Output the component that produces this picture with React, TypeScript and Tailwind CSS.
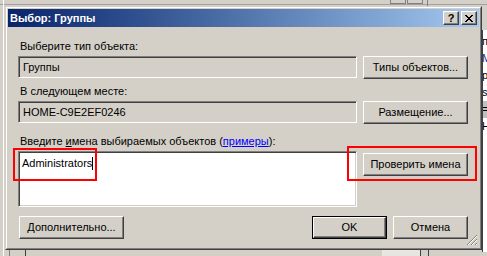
import React from 'react';

const font = "font-['Liberation_Sans',Arial,sans-serif]";

const Button: React.FC<{ label: React.ReactNode; w: string; isDefault?: boolean }> = ({ label, w, isDefault }) => {
  const bevel =
    'h-full w-full flex items-center justify-center border border-t-white border-l-white border-r-[#404040] border-b-[#404040] shadow-[inset_-1px_-1px_0_#808080] text-[11px] text-black';
  if (isDefault) {
    return (
      <div className={`${w} h-[23px] shrink-0 border border-black`}>
        <div className={bevel}>{label}</div>
      </div>
    );
  }
  return (
    <div className={`${w} h-[23px] shrink-0`}>
      <div className={bevel}>{label}</div>
    </div>
  );
};

const Sunken: React.FC<{ className: string; children?: React.ReactNode }> = ({ className, children }) => (
  <div
    className={`${className} shrink-0 border border-t-[#808080] border-l-[#808080] border-r-white border-b-white shadow-[inset_1px_1px_0_#404040,inset_-1px_-1px_0_#d4d0c8]`}
  >
    {children}
  </div>
);

export default function App() {
  return (
    <div className={`relative w-[487px] h-[256px] overflow-hidden bg-[#d4d0c8] ${font}`}>
      {/* windows behind the dialog */}
      <div className="absolute left-0 top-0 w-[487px] h-[5px] bg-[#d4d0c8] border-b border-[#a0a0a0]" />
      <div className="absolute left-[390px] top-0 w-[16px] h-[4px] border border-t-0 border-[#808080] bg-[#d4d0c8]" />
      <div className="absolute left-[407px] top-0 w-[16px] h-[4px] border border-t-0 border-[#808080] bg-[#d4d0c8]" />
      <div className="absolute left-[427px] top-0 w-px h-[6px] bg-[#808080]" />
      <div className="absolute left-[3px] top-0 w-px h-[256px] bg-[#ffffff]" />
      <div className="absolute left-[482px] top-[30px] w-[5px] h-[222px] bg-white border-l border-[#404040] overflow-hidden text-[11px] leading-[17px] text-black">
        <div className="pt-[3px] -ml-[1px]">
          <div>п</div>
          <div className="text-[#1a2a8a]">М</div>
          <div>р</div>
          <div>s</div>
          <div className="bg-[#c0c0c0]">=</div>
          <div>Н</div>
        </div>
      </div>
      <div className="absolute left-[9px] top-[250px] w-px h-[6px] bg-[#808080]" />
      <div className="absolute left-[25px] top-[250px] w-px h-[6px] bg-[#404040]" />
      <div className="absolute left-[382px] top-[250px] w-[38px] h-[6px] bg-[#e8e6e0]" />
      <div className="absolute left-[420px] top-[250px] w-px h-[6px] bg-[#404040]" />
      <div className="absolute left-[428px] top-[250px] w-px h-[6px] bg-[#404040]" />

      {/* dialog window */}
      <div className="absolute left-[5px] top-[6px] w-[477px] h-[244px] border border-t-[#d4d0c8] border-l-[#d4d0c8] border-r-[#404040] border-b-[#404040] bg-[#d4d0c8]">
        <div className="h-full w-full border border-t-white border-l-white border-r-[#808080] border-b-[#808080] p-px flex flex-col">
          <div className="h-[18px] shrink-0 flex items-center justify-between bg-gradient-to-r from-[#0a246a] to-[#a6caf0] pl-[2px] pr-[2px]">
            <span className="text-white font-bold text-[11px] leading-[14px]">Выбор: Группы</span>
            <div className="flex gap-[2px]">
              <div className="w-[16px] h-[14px] flex items-center justify-center bg-[#d4d0c8] border border-t-white border-l-white border-r-[#404040] border-b-[#404040] shadow-[inset_-1px_-1px_0_#808080] text-[11px] font-bold leading-none text-black">
                ?
              </div>
              <div className="w-[16px] h-[14px] flex items-center justify-center bg-[#d4d0c8] border border-t-white border-l-white border-r-[#404040] border-b-[#404040] shadow-[inset_-1px_-1px_0_#808080]">
                <svg width="8" height="7" viewBox="0 0 8 7" shapeRendering="crispEdges">
                  <path d="M0 0h2v1h-2zM6 0h2v1h-2zM1 1h2v1h-2zM5 1h2v1h-2zM2 2h4v1h-4zM3 3h2v1h-2zM2 4h4v1h-4zM1 5h2v1h-2zM5 5h2v1h-2zM0 6h2v1h-2zM6 6h2v1h-2z" fill="#000" />
                </svg>
              </div>
            </div>
          </div>

          <div className="flex-1 pl-[10px] pr-[11px] flex flex-col text-[11px] text-black relative">
            <div className="mt-[12px] leading-[14px] pl-[2px]">Выберите тип объекта:</div>
            <div className="mt-[3px] flex items-start gap-[6px]">
              <Sunken className="w-[339px] h-[22px] flex items-center pl-[4px] bg-[#d4d0c8]">Группы</Sunken>
              <Button label="Типы объектов..." w="w-[105px]" />
            </div>

            <div className="mt-[5px] leading-[14px] pl-[2px]">В следующем месте:</div>
            <div className="mt-[3px] flex items-start gap-[6px]">
              <Sunken className="w-[339px] h-[22px] flex items-center pl-[4px] bg-[#d4d0c8]">HOME-C9E2EF0246</Sunken>
              <Button label="Размещение..." w="w-[105px]" />
            </div>

            <div className="mt-[10px] leading-[14px] pl-[2px]">
              Введите <span className="underline">и</span>мена выбираемых объектов (
              <span className="underline text-[#0000ff]">примеры</span>):
            </div>
            <div className="mt-[3px] flex items-start gap-[6px]">
              <Sunken className="w-[339px] h-[56px] bg-white pl-[3px] pt-[4px]">
                <div className="flex items-center leading-[14px]">
                  <span>Administrators</span>
                  <span className="w-px h-[13px] bg-black" />
                </div>
              </Sunken>
              <div className="mt-[2px]">
                <Button label="Проверить имена" w="w-[105px]" />
              </div>
            </div>

            <div className="mt-[9px] flex items-start">
              <div className="ml-px">
                <Button label="Дополнительно..." w="w-[105px]" />
              </div>
              <div className="ml-auto flex gap-[6px]">
                <Button label="OK" w="w-[75px]" isDefault />
                <Button label="Отмена" w="w-[75px]" />
              </div>
            </div>

            <svg className="absolute right-[1px] bottom-[1px]" width="12" height="12" viewBox="0 0 12 12" shapeRendering="crispEdges">
              <path d="M11 1L1 11M11 5L5 11M11 9L9 11" stroke="#808080" strokeWidth="1.2" />
              <path d="M11 2L2 11M11 6L6 11M11 10L10 11" stroke="#ffffff" strokeWidth="1" />
            </svg>
          </div>
        </div>
      </div>

      {/* red highlight frames */}
      <div className="absolute left-[13px] top-[148px] w-[84px] h-[33px] border-2 border-[#ff0000]" />
      <div className="absolute left-[347px] top-[146px] w-[130px] h-[35px] border-2 border-[#ff0000]" />
    </div>
  );
}
